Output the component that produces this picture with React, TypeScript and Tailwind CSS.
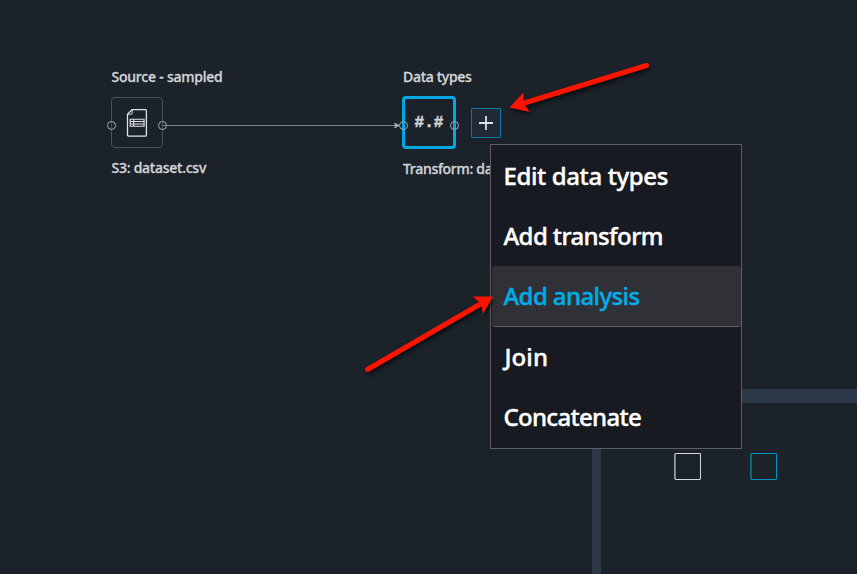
import React from "react";

const menuItems = [
  { label: "Edit data types", tracking: "tracking-[-0.38px]" },
  { label: "Add transform", tracking: "tracking-[-0.6px]" },
  { label: "Add analysis", tracking: "tracking-[-0.6px]", active: true },
  { label: "Join", tracking: "tracking-[0.1px] indent-[1px]" },
  { label: "Concatenate", tracking: "tracking-[-0.7px]" },
];

function Port() {
  return <span className="mt-[5px] size-[9px] shrink-0 rounded-full border border-[#a3a8ad]" />;
}

function FileIcon() {
  return (
    <svg width="22" height="30" viewBox="0 0 22 30" fill="none" stroke="#e0e3e6" strokeWidth="1.3">
      <path d="M6 1.6H19.2Q20.4 1.6 20.4 2.8V26.9Q20.4 28.1 19.2 28.1H2.7Q1.5 28.1 1.5 26.9V6.2Z" />
      <path d="M6.2 1.8V4.8Q6.2 6.2 4.8 6.2H1.7" strokeWidth="1" />
      <path d="M4.2 11.2H18.1V18.3H4.2ZM4.2 13.5H18.1M4.2 16H18.1M7.7 11.2V18.3" strokeWidth="1.1" />
    </svg>
  );
}

function Minimap() {
  return (
    <aside className="absolute bottom-0 right-0 flex h-[185px] w-[265px] items-start gap-[49px] border-l-[9px] border-t-[14px] border-[#2d3848] pl-[73px] pt-[50px]">
      <svg width="27" height="27" fill="none" stroke="#d3d6d8">
        <rect x="0.9" y="0.5" width="25.7" height="26" rx="1.5" strokeWidth="1.2" />
      </svg>
      <svg width="27" height="27" fill="none" stroke="#078fbe">
        <rect x="0.9" y="0.5" width="25.7" height="26" rx="1.5" strokeWidth="1.2" />
      </svg>
    </aside>
  );
}

function Arrows() {
  return (
    <svg className="pointer-events-none absolute inset-0 drop-shadow-[1px_3px_2px_rgba(0,0,0,0.6)]" width="857" height="574" fill="#fb1500" stroke="#fb1500">
      <path d="M646.5 65.5L521 104" strokeWidth="5" strokeLinecap="round" />
      <path d="M509.5 107.5L523.5 92.5L523.5 102.5L529.5 112Z" stroke="none" />
      <path d="M367.5 369.5L483 302.5" strokeWidth="5" strokeLinecap="round" />
      <path d="M493 296.5L472.5 296.5L481 303.5L483 314Z" stroke="none" />
    </svg>
  );
}

export default function App() {
  return (
    <main className="relative h-[574px] w-[857px] overflow-hidden bg-[#1b222a] pl-[111px] pt-[67px] font-['Noto_Sans',sans-serif] text-[#d2d5d8]">
      <div className="grid w-max grid-cols-[291px_99px] gap-y-[9px] whitespace-nowrap text-sm font-medium leading-5 [-webkit-text-stroke:0.3px]">
        <span className="pl-[0.5px] tracking-[-0.22px]">Source - sampled</span>
        <span className="pl-px tracking-[-0.3px]">Data types</span>

        <div className="flex items-center">
          <div className="flex h-[51px] w-[52px] shrink-0 items-center justify-between rounded-[4px] border border-[#4a5058] [&>span:first-child]:-ml-[5px] [&>span:last-child]:-mr-[5px]">
            <Port />
            <FileIcon />
            <Port />
          </div>
          <svg className="mt-[5px] grow" height="7" viewBox="0 0 239 7" preserveAspectRatio="xMaxYMid slice">
            <path d="M0 3.5H235" stroke="#7b8289" />
            <path d="M231.5 0.5L237 3.5L231.5 6.5Z" fill="#a3a8ad" />
          </svg>
        </div>

        <div className="flex items-center justify-between">
          <div className="flex h-[53px] w-[54px] items-center justify-between rounded-[4px] border-[3px] border-[#00a9e6] [&>span:first-child]:-ml-[6px] [&>span:last-child]:-mr-[6px]">
            <Port />
            <span className="pt-px font-['Liberation_Mono',monospace] text-base font-bold [-webkit-text-stroke:0.5px]">#.#</span>
            <Port />
          </div>
          <button className="flex size-[30px] items-center justify-center rounded-[1px] border border-[#087b9f] bg-[#202a36]">
            <svg width="14" height="14" stroke="#dddfe2" strokeWidth="1.8">
              <path d="M7 0V14M0 7H14" />
            </svg>
          </button>
        </div>

        <span className="pl-[0.5px] tracking-[-0.25px]">S3: dataset.csv</span>
        <span className="pl-px pt-px tracking-[-0.3px]">Transform: data</span>
      </div>

      <Minimap />

      <nav className="absolute left-[490px] top-[144px] flex h-[305px] w-[252px] flex-col border border-[#5e5f61] bg-[#171a21] pt-px text-2xl font-medium [-webkit-text-stroke:0.4px]">
        {menuItems.map(({ label, tracking, active }) => (
          <div
            key={label}
            className={`flex items-center whitespace-nowrap ${tracking} ${
              active
                ? "ml-px h-[61px] rounded-[3px] border-b border-[#5e5f61] bg-[#303136] pl-[11.5px] text-[#00ade8]"
                : "h-[60px] pl-[12.5px] text-white"
            }`}
          >
            {label}
          </div>
        ))}
      </nav>

      <Arrows />
    </main>
  );
}
